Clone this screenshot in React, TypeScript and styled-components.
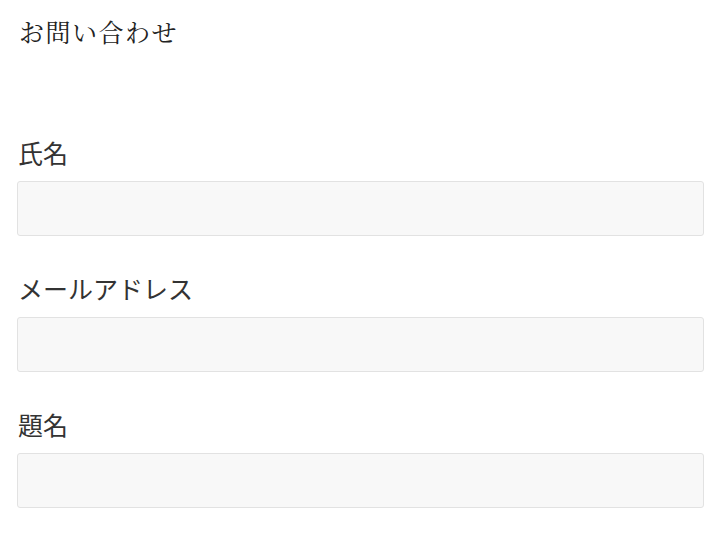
import React from "react";
import styled, { createGlobalStyle } from "styled-components";

const Global = createGlobalStyle`
  html, body { margin: 0; padding: 0; background: #fff; }
  body { font-family: "Noto Sans CJK JP", "Noto Sans", sans-serif; }
  * { box-sizing: border-box; }
`;

const Page = styled.div`
  padding: 19px 14px 0 17px;
  display: flex;
  flex-direction: column;
`;

const Title = styled.h1`
  margin: 0 0 96px 2px;
  font-family: "Noto Serif CJK JP", "Noto Sans CJK JP", serif;
  font-size: 25px;
  line-height: 1;
  font-weight: 400;
  color: #222;
  letter-spacing: 1.5px;
`;

const Form = styled.form`
  display: flex;
  flex-direction: column;
  gap: 40px;
`;

const Field = styled.div`
  display: flex;
  flex-direction: column;
  gap: 16px;
`;

const Label = styled.label`
  margin-left: 1px;
  font-size: 25px;
  line-height: 1;
  color: #333;
`;

const Input = styled.input`
  width: 100%;
  height: 55px;
  background: #f8f8f8;
  border: 1px solid #e2e2e2;
  border-radius: 3px;
  outline: none;
  font-size: 18px;
  padding: 0 12px;
`;

const fields = [
  { id: "name", label: "氏名" },
  { id: "email", label: "メールアドレス" },
  { id: "subject", label: "題名" },
];

export default function App() {
  return (
    <>
      <Global />
      <Page>
        <Title>お問い合わせ</Title>
        <Form onSubmit={(e) => e.preventDefault()}>
          {fields.map((f) => (
            <Field key={f.id}>
              <Label htmlFor={f.id}>{f.label}</Label>
              <Input id={f.id} type="text" />
            </Field>
          ))}
        </Form>
      </Page>
    </>
  );
}
